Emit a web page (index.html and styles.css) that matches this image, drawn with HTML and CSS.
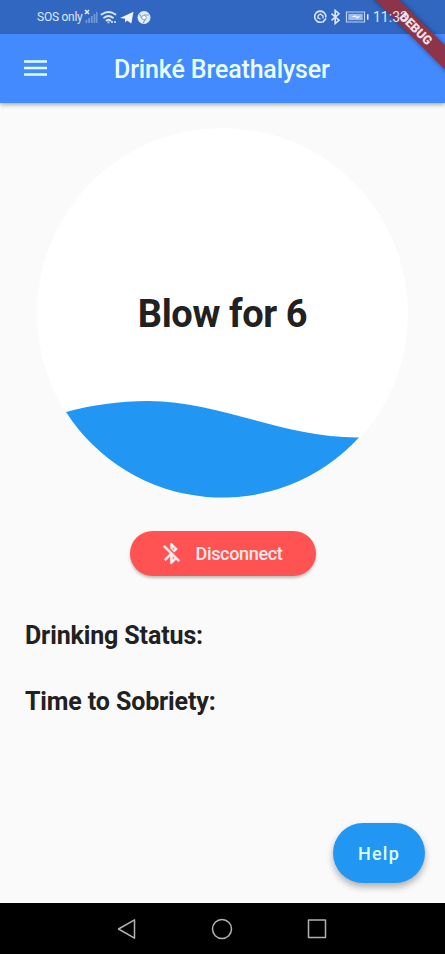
FILE: index.html
```html
<!DOCTYPE html>
<html lang="en">
<head>
<meta charset="utf-8">
<title>Drinké Breathalyser</title>
<link rel="stylesheet" href="styles.css">
</head>
<body>
<div class="app">
  <div class="status">
    <span class="carrier">SOS only</span>
    <svg class="signals" width="68" height="18" viewBox="0 0 68 18">
      <path d="M1 2l4 4M5 2L1 6" stroke="#e6efff" stroke-width="1.500"/>
      <g fill="#6f97dc"><path d="M1.500 12h1.800v3H1.500zM4.200 10h1.800v5H4.200zM6.900 8h1.800v7H6.900zM9.600 6h1.800v9H9.600zM12 4h1.500v11H12z"/></g>
      <g fill="none" stroke="#dce8fd" stroke-width="1.800" stroke-linecap="round"><path d="M17.500 6.500q7-5 14 0M20 9.700q4.500-3.500 9 0M22.500 12.500q2-1.500 4 0"/></g>
      <path d="M23.500 13.500h2v1.800h-2zM27 13h2v2h-2zM30 13h2v2h-2z" fill="#b8cff7"/>
      <path d="M36 10L49.500 3.700l-2.200 11.800-4.200-3-2 2v-3.700z" fill="#eff5ff"/>
      <circle cx="60" cy="9.500" r="6.500" fill="#e3ecfb"/>
      <path d="M60 7h5M58 10.500L55.500 6M62 10.500l-3 4.500" stroke="#7fa3df" stroke-width="1.200"/>
      <circle cx="60" cy="9.500" r="2.300" fill="#f6f9ff" stroke="#7fa3df"/>
    </svg>
    <svg class="device" width="57" height="18" viewBox="0 0 57 18">
      <g fill="none" stroke="#dce8fd" stroke-width="1.600">
        <path d="M9 14a5.600 5.600 0 1 1 3.800-4.500"/>
        <path d="M5 7.500l2.500-1.500 2.500 2v2.500M5 7.500v2.500l2.500 1" stroke-width="1.300"/>
        <path d="M9.500 14.500l3.500-4"/>
        <path d="M18.500 5.700l7.500 6.500L22.200 15.500v-13L26 5.800l-7.500 6.500"/>
        <path d="M33.500 4h18v10h-18z" stroke="#bdd1f5" stroke-width="1.200"/>
      </g>
      <path d="M35.300 5.800h14.400v6.400H35.300z" fill="#9dbbee"/>
      <path d="M38.500 8.700l4-1.500v1.200h5l-4 2.400V9.300z" fill="#fff"/>
      <path d="M54 6.300h1.500v5.500H54z" fill="#dce8fd"/>
    </svg>
    <span class="clock">11:33</span>
  </div>
  <header class="bar">
    <svg class="menu" width="23" height="16" viewBox="0 0 23 16"><path d="M0 1.500h23M0 8h23M0 14.500h23" stroke="#dfffff" stroke-width="2.300"/></svg>
    <h1>Drinké Breathalyser</h1>
  </header>
  <main>
    <div class="gauge">
      <svg class="wave" viewBox="37 128 371 371" width="371" height="371">
        <path d="M66 412C92 405 119 401 148 401C220 401 282 438 359 437.500A185.500 185.500 0 0 1 66 412z" fill="#2196f3"/>
      </svg>
      <span class="prompt">Blow for 6</span>
    </div>
    <button class="disconnect">
      <svg width="25" height="27" viewBox="0 0 24 24"><path fill="#fff0f0" stroke="#fff0f0" stroke-width=".5" d="M13 5.830l1.880 1.880-1.600 1.600 1.410 1.410 3.020-3.020L12 2h-1v5.030l2 2v-3.200zM5.410 4L4 5.410 10.590 12 5 17.590 6.410 19 11 14.410V22h1l4.290-4.290 2.300 2.290L20 18.590 5.410 4zM13 18.170v-3.760l1.880 1.880L13 18.170z"/></svg>
      <span>Disconnect</span>
    </button>
    <section class="facts">
      <h2>Drinking Status:</h2>
      <h2>Time to Sobriety:</h2>
    </section>
    <button class="help">Help</button>
  </main>
  <nav>
    <svg width="20" height="22" viewBox="0 0 20 22"><path d="M17.500 1.800v18.400L1.500 11z"/></svg>
    <svg width="22" height="22" viewBox="0 0 22 22"><circle cx="11" cy="11" r="9.500"/></svg>
    <svg width="20" height="22" viewBox="0 0 20 22"><path d="M1.500 2h17v17.500h-17z"/></svg>
  </nav>
  <div class="ribbon">DEBUG</div>
</div>
</body>
</html>
```
FILE: styles.css
```css
* { box-sizing: border-box; }
body { margin: 0; font-family: Roboto, sans-serif; }
button { border: 0; font-family: inherit; }
h1, h2 { margin: 0; }
.app {
  position: relative;
  width: 445px;
  height: 954px;
  overflow: hidden;
  display: flex;
  flex-direction: column;
  background: #fafafa;
}
.status {
  height: 34px;
  flex: none;
  display: flex;
  align-items: center;
  padding-left: 37px;
  background: #3267c1;
  color: #dce8fd;
}
.carrier { font-size: 12px; width: 46px; white-space: nowrap; letter-spacing: -0.25px; }
.signals { margin-left: 1px; }
.device { margin-left: 161px; }
.clock { position: relative; z-index: 3; margin-left: 3px; font-size: 14px; }
.bar {
  height: 69px;
  flex: none;
  display: flex;
  align-items: center;
  padding: 0 24px;
  background: #448aff;
  box-shadow: 0 2px 4px rgba(0, 0, 0, .3);
  z-index: 1;
}
.menu { margin-top: -1px; }
.bar h1 {
  margin-left: 67px;
  padding-top: 2px;
  font-size: 25px;
  letter-spacing: -0.15px;
  line-height: 30px;
  font-weight: 500;
  color: #e9ffff;
  white-space: nowrap;
}
main {
  flex: 1;
  display: flex;
  flex-direction: column;
  align-items: center;
  padding: 25px 20px 20px;
}
.gauge {
  display: grid;
  place-items: center;
  width: 371px;
  height: 371px;
  flex: none;
  border-radius: 50%;
  background: #fff;
}
.wave, .prompt { grid-area: 1 / 1; }
.prompt { z-index: 1; font-size: 38px; letter-spacing: -0.4px; font-weight: 700; color: #212121; white-space: nowrap; }
.disconnect {
  margin-top: 32px;
  width: 186px;
  height: 45px;
  flex: none;
  display: flex;
  align-items: center;
  gap: 12px;
  padding: 0 0 0 29px;
  border-radius: 23px;
  background: #ff5252;
  color: #ffecec;
  font-size: 18px;
  letter-spacing: -0.33px;
  font-weight: 500;
  box-shadow: 0 2px 3px rgba(0, 0, 0, .25);
}
.facts {
  align-self: stretch;
  margin-top: 44px;
  padding-left: 5px;
  display: grid;
  gap: 34px;
}
.facts h2 { font-size: 25px; letter-spacing: -0.13px; line-height: 32px; font-weight: 700; color: #212121; }
.help {
  margin-top: auto;
  align-self: flex-end;
  width: 92px;
  height: 60px;
  flex: none;
  padding: 0;
  border-radius: 30px;
  background: #2196f3;
  color: #dfffff;
  font-size: 18px;
  font-weight: 500;
  letter-spacing: 1.200px;
  box-shadow: 0 4px 7px rgba(0, 0, 0, .3);
}
nav {
  height: 51px;
  flex: none;
  display: flex;
  justify-content: space-between;
  align-items: center;
  padding: 0 118px 0 117px;
  background: #000;
}
nav svg { fill: none; stroke: #b2b2b2; stroke-width: 1.500; stroke-linejoin: round; }
.ribbon {
  position: absolute;
  z-index: 2;
  left: 345px;
  top: 20px;
  width: 142px;
  height: 17px;
  line-height: 17px;
  text-align: center;
  transform: rotate(45deg);
  background: #8d3449;
  color: #f3e3e8;
  font-size: 12.500px;
  font-weight: 900;
  box-shadow: 0 0 5px rgba(0, 0, 0, .45);
}
```
